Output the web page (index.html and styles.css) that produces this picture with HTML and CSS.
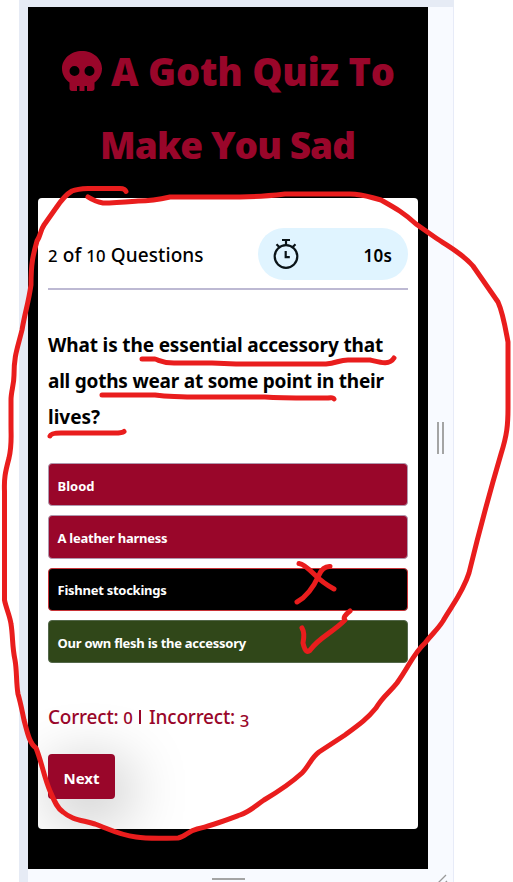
FILE: index.html
```html
<!DOCTYPE html>
<html lang="en">
<head>
<meta charset="utf-8">
<title>A Goth Quiz To Make You Sad</title>
<link rel="stylesheet" href="styles.css">
</head>
<body>
<div class="stage">
  <div class="middle">
    <main class="phone">
      <h1 class="title">
        <span class="title-line title-first"><svg class="skull" viewBox="0 0 40 40" aria-hidden="true"><path fill-rule="evenodd" d="M20 0C9 0 0 7.800 0 17.500C0 23.200 3 28.300 7.500 31.400V37.500C7.500 39 8.500 40 10 40H15V35H17.500V40H22.500V35H25V40H30C31.500 40 32.500 39 32.500 37.500V31.400C37 28.300 40 23.200 40 17.500C40 7.800 31 0 20 0ZM12.500 15A5 5 0 1 1 12.500 25A5 5 0 0 1 12.500 15ZM27.500 15A5 5 0 1 1 27.500 25A5 5 0 0 1 27.500 15Z"/></svg>A Goth Quiz To</span>
        <span class="title-line title-second">Make You Sad</span>
      </h1>
      <section class="card">
        <header class="status">
          <span class="progress"><span class="digit">2</span> of <span class="digit">10</span> Questions</span>
          <span class="timer">
            <svg class="watch" viewBox="0 0 28 32" aria-hidden="true"><circle cx="14" cy="18.500" r="11.300"/><path d="M14 7V2M10 2H18M4.500 6.200L7.500 9.200M23.500 6.200L20.500 9.200M13.700 13V19.200H17.800"/></svg>
            <span class="seconds">10s</span>
          </span>
        </header>
        <p class="question"><span class="q1">What is the essential accessory that</span><br><span class="q2">all goths wear at some point in their</span><br><span class="q3">lives?</span></p>
        <div class="options">
          <button class="option">Blood</button>
          <button class="option">A leather harness</button>
          <button class="option wrong">Fishnet stockings</button>
          <button class="option right">Our own flesh is the accessory</button>
        </div>
        <p class="score">Correct: <span class="digit">0</span> <span class="bar"></span> Incorrect: <span class="digit three">3</span></p>
        <button class="next">Next</button>
      </section>
    </main>
    <div class="side"><span class="grip"></span></div>
  </div>
  <footer class="bottom"><span class="handle"></span><svg class="corner" viewBox="0 0 12 12"><path d="M0 11L9 2M7 11L10 8"/></svg></footer>
</div>
<svg class="ink" viewBox="0 0 513 882" aria-hidden="true">
  <path d="M126 191.500Q125 188.500 120 188.500H88Q77 189 72 191C65 195 60 202 56 208L44 225C40 231 41 235 37 241C33 255 31 263 31 285C28 305 25 312 22 330C17 350 14 356 14 375C14 385 11 391 11 400V425C11 439 12 445 9 458C5 473 4 479 4.500 491V600C6 608 10 616 11 624C13 636 12 646 15 660C17 671 16 682 18 694C21 704 22 711 24 720C27 731 29 743 36 748C42 763 44 777 50 791C55 803 58 809 63 812C72 820 82 820 95 824C109 829 119 835 136 837C149 839 163 838 178 838C185 837 188 831 197 829C211 826 224 821 240 815C251 811 255 806 264 800C281 790 290 784 302 773C309 766 311 758 319 752L345 735C360 724 367 719 376 708C383 696 390 692 397 683C410 665 413 654 425 643C433 633 438 629 443 621C453 604 463 592 469 573C480 528 488 498 501 454C507 435 508 425 508 408V342C505 326 503 313 498 302L473 266C463 254 449 247 436 238L416 224C404 213 397 209 381 200C369 197 363 194 350 194H285C267 196 254 197 240 197H170C157 200 149 201 138 201C126 202 115 203 103 203C97 202 94 201 88 197"/>
  <path d="M142 359H155C161 361 163 363 174 363H212L236 364H326C337 363 339 360 348 360H370C379 362 389 366 394 358"/>
  <path d="M102 395H155C169 397 174 396 187 397H265C279 398 293 398 311 398H328Q333 397 334 399"/>
  <path d="M50 436Q51 433 61 433H115Q122 433 124 431.500"/>
  <path d="M299 563.500Q304 564 315 575Q323 583 334 589M330 566.500Q323 566 319 575Q310 595 297 602"/>
  <path d="M302 628Q305 633 303 643Q306 656 311 649C320 637 332 633 345 620Q342 617 350 611"/>
</svg>
</body>
</html>
```
FILE: styles.css
```css
* { box-sizing: border-box; }
body { margin: 0; background: #fff; font-family: "Noto Sans", "Open Sans", sans-serif; overflow: hidden; }
.stage { width: 435px; height: 882px; margin-left: 19px; padding: 7px 0 0 9px; background: #e6ebf5; display: flex; flex-direction: column; }
.middle { display: flex; height: 862px; }
.phone { width: 400px; background: #000; padding: 0 10px; }
.side { width: 26px; background: #f8faff; border-right: 1px solid #e7ebf8; padding: 415px 0 0 9px; }
.grip { display: block; width: 7px; height: 32px; border: solid #a4a4a4; border-width: 0 2px; }
.bottom { height: 13px; background: #f8faff; border-right: 1px solid #e7ebf8; display: flex; padding: 9px 4px 0 184px; justify-content: space-between; }
.handle { width: 33px; height: 2px; background: #a4a4a4; }
.corner { width: 12px; height: 12px; margin-top: -5px; fill: none; stroke: #999; stroke-width: 1.300; }
.title { margin: 0; height: 191px; padding-top: 28px; color: #99062a; font: 800 38px/73px "Open Sans", sans-serif; }
.title-line { display: flex; height: 73px; align-items: center; white-space: nowrap; }
.title-first { padding-left: 24px; letter-spacing: -.2px; }
.title-second { padding-left: 62px; font-size: 37px; letter-spacing: -.95px; }
.skull { width: 40px; height: 40px; margin: -2px 9px 0 0; fill: #99062a; flex: none; }
.card { height: 631px; padding: 30px 10px 0; background: #fff; border-radius: 4px; overflow: hidden; }
.status { height: 62px; display: flex; justify-content: space-between; align-items: flex-start; border-bottom: 2px solid #bdb9d3; }
.progress { font-size: 19px; font-weight: 500; line-height: 54px; letter-spacing: .1px; }
.digit { font-size: .88em; }
.timer { display: flex; justify-content: space-between; align-items: center; width: 150px; height: 52px; padding: 0 16px 0 14px; border-radius: 26px; background: #e0f4ff; }
.watch { width: 28px; height: 32px; fill: none; stroke: #0b1418; stroke-width: 2.200; }
.seconds { font-size: 17px; font-weight: 600; padding-top: 3px; letter-spacing: .2px; }
.question { margin: 37px 0 0; height: 108px; font-size: 19px; font-weight: 700; line-height: 36px; white-space: nowrap; }
.q1 { letter-spacing: -.14px; }
.q2 { letter-spacing: -.22px; }
.options { display: grid; gap: 9px; margin-top: 28px; }
.option { height: 43.3px; padding: 2px 8.5px 0; border: 1px solid #b098ae; border-radius: 4px; background: #99062a; color: #fff; text-align: left; font: 700 13px/20px "Noto Sans", sans-serif; letter-spacing: -.26px; }
.option:first-child { letter-spacing: 0; }
.option.wrong { background: #000; border-color: #c83236; }
.option.right { background: #304719; border-color: #53674a; }
.score { margin: 38.800px 0 0; height: 30px; font-size: 19px; line-height: 30px; font-weight: 500; letter-spacing: -.2px; color: #99062a; }
.bar { display: inline-block; width: 2px; height: 14px; background: #99062a; margin: 0 3px 0 2px; }
.three { position: relative; top: 3px; }
.next { display: block; width: 67px; height: 45px; margin-top: 22px; padding: 3px 0 0; border: 0; border-radius: 4px; background: #99062a; color: #fff; font: 700 15px "Noto Sans", sans-serif; box-shadow: 8px 14px 60px 4px rgba(0,0,0,.25); }
.ink { position: absolute; left: 0; top: 0; width: 513px; height: 882px; fill: none; stroke: #e91d1d; stroke-width: 5; stroke-linecap: round; stroke-linejoin: round; }
```
